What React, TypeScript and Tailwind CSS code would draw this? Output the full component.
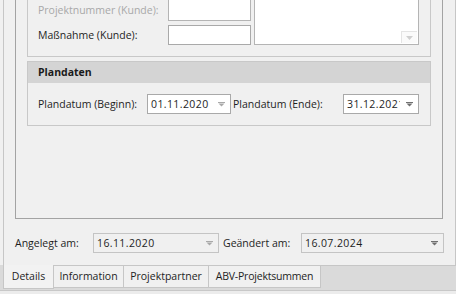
import React from "react";

const font = { fontFamily: '"Open Sans", "Noto Sans", sans-serif' };

const Arrow = ({ dark }: { dark?: boolean }) => (
  <svg width="7" height="5" viewBox="0 0 7 5" className="shrink-0">
    <rect x="0" y="0" width="7" height="1" fill={dark ? "#6f6f6f" : "#a9a9a9"} />
    <path d="M0.5 1.5 L6.5 1.5 L3.5 4.5 Z" fill={dark ? "#6f6f6f" : "#a9a9a9"} />
  </svg>
);

const DateBox = ({
  value,
  className,
  readOnly,
  dark,
  clip,
}: {
  value: string;
  className: string;
  readOnly?: boolean;
  dark?: boolean;
  clip?: boolean;
}) => (
  <div
    className={`flex h-[20px] items-center border ${
      readOnly ? "border-[#c4c4c4] bg-[#f0f0f0]" : "border-[#a9a9a9] bg-white"
    } ${className}`}
  >
    <div
      className={`min-w-0 flex-1 whitespace-nowrap pl-[3px] tracking-[0.4px] text-[#1e1e1e] ${
        clip ? "overflow-hidden" : ""
      }`}
    >
      {value}
    </div>
    <div className="flex w-[18px] shrink-0 justify-center">
      <Arrow dark={dark} />
    </div>
  </div>
);

export default function App() {
  return (
    <div
      className="flex h-[294px] w-[456px] flex-col overflow-hidden bg-[#f0f0f0] text-[10.5px] leading-none text-[#1e1e1e]"
      style={font}
    >
      <div className="ml-[3px] flex h-[265px] w-[453px] shrink-0 flex-col border-x border-[#c6c6c6]">
        {/* inner panel */}
        <div className="ml-[11px] h-[219px] w-[428px] shrink-0 border-x border-b border-[#a3a3a3]">
          {/* project group (scrolled) */}
          <div className="ml-[11px] flex h-[57px] w-[404px] border-x border-b border-[#c8c8c8]">
            <div className="flex w-[223px] flex-col gap-[4px] pl-[10px]">
              <div className="flex h-[21px] items-center">
                <span className="w-[130px] text-[#a8a8a8]">Projektnummer (Kunde):</span>
                <div className="h-[21px] w-[83px] border-x border-b border-[#b4b4b4] bg-white" />
              </div>
              <div className="flex h-[20px] items-center">
                <span className="w-[130px]">Maßnahme (Kunde):</span>
                <div className="h-[20px] w-[83px] border border-[#a9a9a9] bg-white" />
              </div>
            </div>
            <div className="ml-[3px] flex h-[45px] w-[165px] items-end justify-end border-x border-b border-[#b4b4b4] bg-white">
              <div className="mb-[1px] mr-[1px] flex h-[12px] w-[16px] items-center justify-center border-l border-t border-[#e4e4e4] bg-[#fafafa]">
                <svg width="7" height="4" viewBox="0 0 7 4">
                  <path d="M0 0 L7 0 L3.5 4 Z" fill="#cfcfcf" />
                </svg>
              </div>
            </div>
          </div>

          {/* Plandaten */}
          <div className="ml-[11px] mt-[4px] flex h-[65px] w-[404px] flex-col border border-[#c8c8c8]">
            <div className="flex h-[21px] shrink-0 items-center bg-[#d4d4d4] pl-[10px] font-bold text-[#1a1a1a]">
              Plandaten
            </div>
            <div className="flex items-center pl-[10px] pt-[11px]">
              <span className="w-[109px]">Plandatum (Beginn):</span>
              <DateBox value="01.11.2020" className="w-[84px]" />
              <span className="ml-[2px] w-[110px]">Plandatum (Ende):</span>
              <DateBox value="31.12.2021" className="w-[76px]" dark clip />
            </div>
          </div>
        </div>

        {/* created / changed */}
        <div className="mt-[14px] flex items-center pl-[11px]">
          <span className="w-[78px]">Angelegt am:</span>
          <DateBox value="16.11.2020" className="w-[126px]" readOnly />
          <span className="ml-[4px] w-[78px]">Geändert am:</span>
          <DateBox value="16.07.2024" className="w-[143px]" readOnly dark />
        </div>
      </div>

      {/* tabs */}
      <div className="flex h-[25px] shrink-0 items-start bg-[#dadada]">
        <div className="ml-[3px] flex h-[24px] w-[51px] items-center justify-center border-x border-b border-[#c6c6c6] bg-[#f2f2f2] pb-[1px]">
          Details
        </div>
        <div className="flex h-[23px] w-[70px] items-center justify-center whitespace-nowrap border-y border-r border-[#c6c6c6] bg-[#f0f0f0]">
          Information
        </div>
        <div className="flex h-[23px] w-[85px] items-center justify-center whitespace-nowrap border-y border-r border-[#c6c6c6] bg-[#f0f0f0]">
          Projektpartner
        </div>
        <div className="flex h-[23px] w-[112px] items-center justify-center whitespace-nowrap border-y border-r border-[#c6c6c6] bg-[#f0f0f0] tracking-[-0.2px]">
          ABV-Projektsummen
        </div>
        <div className="h-full flex-1 border-t border-[#c6c6c6]" />
      </div>
      <div className="h-px shrink-0 bg-[#c8c8c8]" />
      <div className="flex-1 bg-[#ececec]" />
    </div>
  );
}
